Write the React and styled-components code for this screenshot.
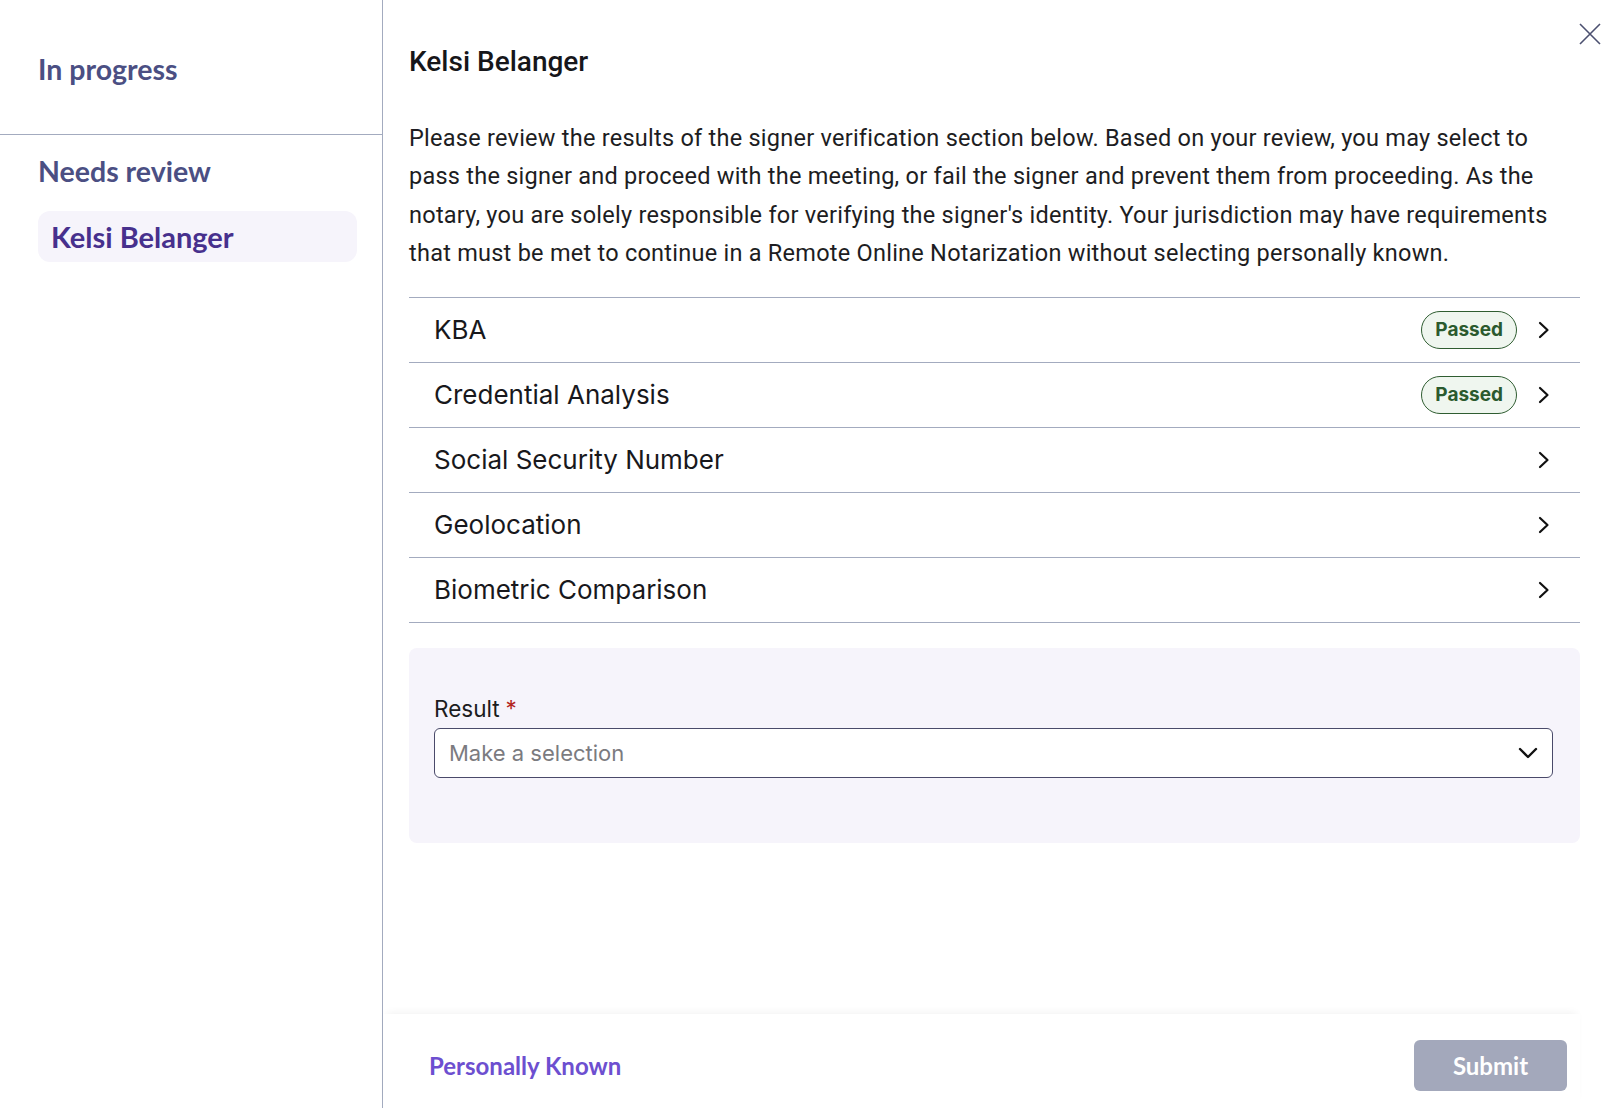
import React from 'react';
import styled, { createGlobalStyle } from 'styled-components';

const GlobalStyle = createGlobalStyle`
  html, body, #root {
    margin: 0;
    height: 100%;
  }
  body {
    background: #ffffff;
    font-family: 'Roboto', 'Liberation Sans', sans-serif;
    color: #1b1b1f;
  }
  * { box-sizing: border-box; }
`;

const checks = [
  { name: 'KBA', status: 'Passed' },
  { name: 'Credential Analysis', status: 'Passed' },
  { name: 'Social Security Number' },
  { name: 'Geolocation' },
  { name: 'Biometric Comparison' },
];

const Layout = styled.div`
  display: flex;
  height: 100vh;
`;

const Sidebar = styled.aside`
  width: 383px;
  flex-shrink: 0;
  border-right: 1px solid #a3abbf;
  display: flex;
  flex-direction: column;
`;

const SideSection = styled.div`
  padding: ${(p) => p.$pad};
  border-bottom: ${(p) => (p.$divided ? '1px solid #a3abbf' : 'none')};
  height: ${(p) => p.$height || 'auto'};
`;

const SideHeading = styled.h3`
  margin: 0;
  font-family: 'Lato', sans-serif;
  font-weight: 700;
  font-size: 28.5px;
  line-height: 34px;
  color: #4b4f83;
`;

const SideItem = styled.div`
  margin-top: 23px;
  height: 51px;
  display: flex;
  align-items: center;
  padding: 0 13px;
  border-radius: 12px;
  background: #f6f4fb;
  font-family: 'Lato', sans-serif;
  font-weight: 700;
  font-size: 29px;
  color: #47308d;
`;

const Main = styled.main`
  flex: 1;
  display: flex;
  flex-direction: column;
  position: relative;
  min-width: 0;
`;

const Content = styled.div`
  flex: 1;
  padding: 45px 34px 0 26px;
`;

const CloseButton = styled.button`
  position: absolute;
  top: 23px;
  right: 13px;
  width: 22px;
  height: 22px;
  padding: 0;
  border: none;
  background: none;
  color: #4c5070;
  cursor: pointer;
`;

const Title = styled.h2`
  margin: 0;
  font-family: 'Roboto', sans-serif;
  font-weight: 500;
  font-size: 28px;
  line-height: 34px;
  color: #16161a;
`;

const Intro = styled.p`
  margin: 40px 0 0;
  font-size: 23.5px;
  letter-spacing: 0.25px;
  line-height: 38.4px;
  color: #1d1d22;
`;

const CheckList = styled.div`
  margin-top: 24px;
  border-top: 1px solid #a3abbf;
`;

const CheckRow = styled.div`
  height: 65px;
  display: flex;
  align-items: center;
  padding: 0 30px 0 25px;
  border-bottom: 1px solid #a3abbf;
  font-family: 'Inter', sans-serif;
  font-size: 26px;
  color: #18181c;
`;

const CheckName = styled.span`
  flex: 1;
`;

const Pill = styled.span`
  height: 38px;
  padding: 0 13px;
  display: inline-flex;
  align-items: center;
  border: 1px solid #2f5d31;
  border-radius: 19px;
  background: #eff6ef;
  color: #2b5a2e;
  font-family: 'Inter', sans-serif;
  font-weight: 700;
  font-size: 19px;
  margin-right: 21px;
`;

const Chevron = styled.svg`
  width: 12px;
  height: 18px;
  display: block;
`;

const ResultPanel = styled.div`
  margin-top: 25px;
  height: 195px;
  padding: 47px 27px 0 25px;
  border-radius: 8px;
  background: #f6f4fb;
  font-family: 'Inter', sans-serif;
`;

const Label = styled.div`
  font-size: 22.5px;
  line-height: 28px;
  color: #1c1c20;
`;

const Required = styled.span`
  color: #b3251e;
  margin-left: 6px;
`;

const Select = styled.div`
  margin-top: 5px;
  height: 50px;
  display: flex;
  align-items: center;
  padding: 0 14px;
  background: #ffffff;
  border: 1px solid #4a4a6a;
  border-radius: 6px;
  font-size: 22px;
  color: #7b7b7f;
`;

const Placeholder = styled.span`
  flex: 1;
`;

const Footer = styled.footer`
  height: 94px;
  margin-right: 34px;
  display: flex;
  align-items: center;
  justify-content: space-between;
  padding: 8px 13px 0 46px;
  box-shadow: 0 -5px 8px -4px rgba(0, 0, 0, 0.06);
  font-family: 'Lato', sans-serif;
  font-weight: 700;
  font-size: 24px;
`;

const LinkButton = styled.button`
  padding: 0;
  border: none;
  background: none;
  font: inherit;
  color: #6d4fd0;
  cursor: pointer;
`;

const SubmitButton = styled.button`
  width: 153px;
  height: 51px;
  border: none;
  border-radius: 6px;
  background: #a3a8bb;
  font: inherit;
  color: #ffffff;
`;

const ChevronRight = () => (
  <Chevron viewBox="0 0 12 18" fill="none">
    <path d="M2 2l7.5 7L2 16" stroke="#111" strokeWidth="2.2" strokeLinecap="round" strokeLinejoin="round" />
  </Chevron>
);

export default function App() {
  return (
    <>
      <GlobalStyle />
      <Layout>
        <Sidebar>
          <SideSection $pad="52px 25px 0 38px" $height="135px" $divided>
            <SideHeading>In progress</SideHeading>
          </SideSection>
          <SideSection $pad="19px 25px 0 38px">
            <SideHeading>Needs review</SideHeading>
            <SideItem>Kelsi Belanger</SideItem>
          </SideSection>
        </Sidebar>
        <Main>
          <CloseButton aria-label="Close">
            <svg width="22" height="22" viewBox="0 0 22 22" fill="none">
              <path d="M1 1l20 20M21 1L1 21" stroke="currentColor" strokeWidth="1.6" />
            </svg>
          </CloseButton>
          <Content>
            <Title>Kelsi Belanger</Title>
            <Intro>
              Please review the results of the signer verification section below. Based on your review, you may select to
              pass the signer and proceed with the meeting, or fail the signer and prevent them from proceeding. As the
              notary, you are solely responsible for verifying the signer's identity. Your jurisdiction may have requirements
              that must be met to continue in a Remote Online Notarization without selecting personally known.
            </Intro>
            <CheckList>
              {checks.map((c) => (
                <CheckRow key={c.name}>
                  <CheckName>{c.name}</CheckName>
                  {c.status && <Pill>{c.status}</Pill>}
                  <ChevronRight />
                </CheckRow>
              ))}
            </CheckList>
            <ResultPanel>
              <Label>
                Result<Required>*</Required>
              </Label>
              <Select>
                <Placeholder>Make a selection</Placeholder>
                <svg width="20" height="12" viewBox="0 0 20 12" fill="none">
                  <path d="M2 2l8 8 8-8" stroke="#111" strokeWidth="2.4" strokeLinecap="round" strokeLinejoin="round" />
                </svg>
              </Select>
            </ResultPanel>
          </Content>
          <Footer>
            <LinkButton>Personally Known</LinkButton>
            <SubmitButton>Submit</SubmitButton>
          </Footer>
        </Main>
      </Layout>
    </>
  );
}
